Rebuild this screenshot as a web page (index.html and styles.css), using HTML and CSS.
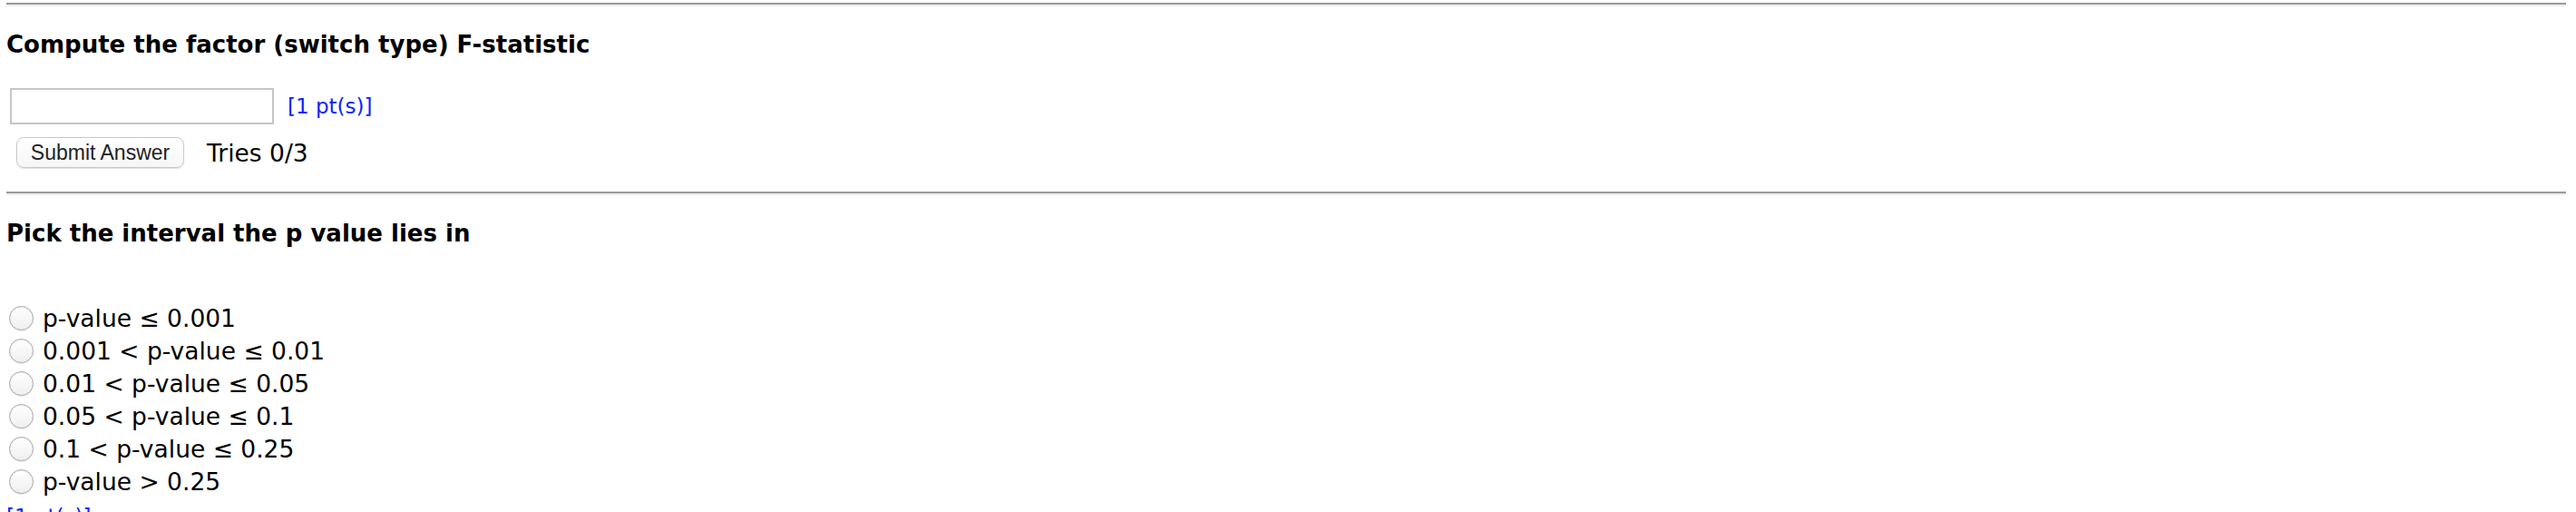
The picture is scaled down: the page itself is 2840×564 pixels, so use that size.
FILE: index.html
```html
<!DOCTYPE html>
<html lang="en">
<head>
    <meta charset="UTF-8">
    <title>Problem</title>
    <link rel="stylesheet" href="styles.css">
</head>
<body>
    <div class="page">
        <hr class="rule">

        <!-- part 1: numeric answer -->
        <div class="part">
            <h2 class="question">Compute the factor (switch type) F-statistic</h2>
            <div class="answer-row">
                <input type="text" class="answer-input">
                <span class="points">[1 pt(s)]</span>
            </div>
            <div class="submit-row">
                <button class="submit-button">Submit Answer</button>
                <span class="tries">Tries 0/3</span>
            </div>
        </div>

        <hr class="rule">

        <!-- part 2: radio choice -->
        <div class="part">
            <h2 class="question">Pick the interval the p value lies in</h2>
            <div class="options">
                <label class="option"><input type="radio" name="pval" class="radio">p-value ≤ 0.001</label>
                <label class="option"><input type="radio" name="pval" class="radio">0.001 &lt; p-value ≤ 0.01</label>
                <label class="option"><input type="radio" name="pval" class="radio">0.01 &lt; p-value ≤ 0.05</label>
                <label class="option"><input type="radio" name="pval" class="radio">0.05 &lt; p-value ≤ 0.1</label>
                <label class="option"><input type="radio" name="pval" class="radio">0.1 &lt; p-value ≤ 0.25</label>
                <label class="option"><input type="radio" name="pval" class="radio">p-value &gt; 0.25</label>
            </div>
            <div class="points points-bottom">[1 pt(s)]</div>
        </div>
    </div>
</body>
</html>
```

FILE: styles.css
```css
body {
    margin: 0;
    background-color: white;
    font-family: "DejaVu Sans", Verdana, sans-serif;
    font-size: 26.5px;
    color: black;
}
.page {
    padding: 3px 11px 0 7px;
}
.rule {
    margin: 0;
    height: 0;
    border: none;
    border-top: 2px solid #9a9a9a;
    border-bottom: 2px solid #ececec;
}
.question {
    margin: 27px 0 0;
    font-size: 26px;
    line-height: 30px;
    font-weight: bold;
}
.answer-row {
    margin-top: 33px;
    display: flex;
    align-items: center;
}
.answer-input {
    box-sizing: border-box;
    width: 291px;
    height: 40px;
    margin: 0 0 0 4px;
    border: 2px solid #c6c6c6;
    background-color: white;
}
.points {
    margin-left: 15px;
    font-size: 23px;
    line-height: 28px;
    color: #0b24ff;
}
.submit-row {
    margin: 14px 0 26px;
    display: flex;
    align-items: center;
}
.submit-button {
    box-sizing: border-box;
    width: 185px;
    height: 34px;
    margin-left: 11px;
    padding: 0;
    font-family: "Liberation Sans", Arial, sans-serif;
    font-size: 23px;
    color: #222;
    background: linear-gradient(#ffffff, #f6f6f6);
    border: 1px solid #c8c8c8;
    border-radius: 8px;
    box-shadow: 0 1px 1px rgba(0, 0, 0, 0.12);
}
.tries {
    margin-left: 25px;
}
.options {
    margin-top: 60px;
}
.option {
    display: flex;
    align-items: center;
    height: 36px;
}
.radio {
    appearance: none;
    -webkit-appearance: none;
    box-sizing: border-box;
    width: 27px;
    height: 27px;
    margin: 0 10px 0 3px;
    border: 1px solid #a8a8a8;
    border-radius: 50%;
    background: linear-gradient(#ffffff, #efefef);
    box-shadow: inset 0 1px 1px rgba(0, 0, 0, 0.08), 0 1px 1px rgba(0, 0, 0, 0.1);
}
.points-bottom {
    margin: 7px 0 0 0;
}
```
